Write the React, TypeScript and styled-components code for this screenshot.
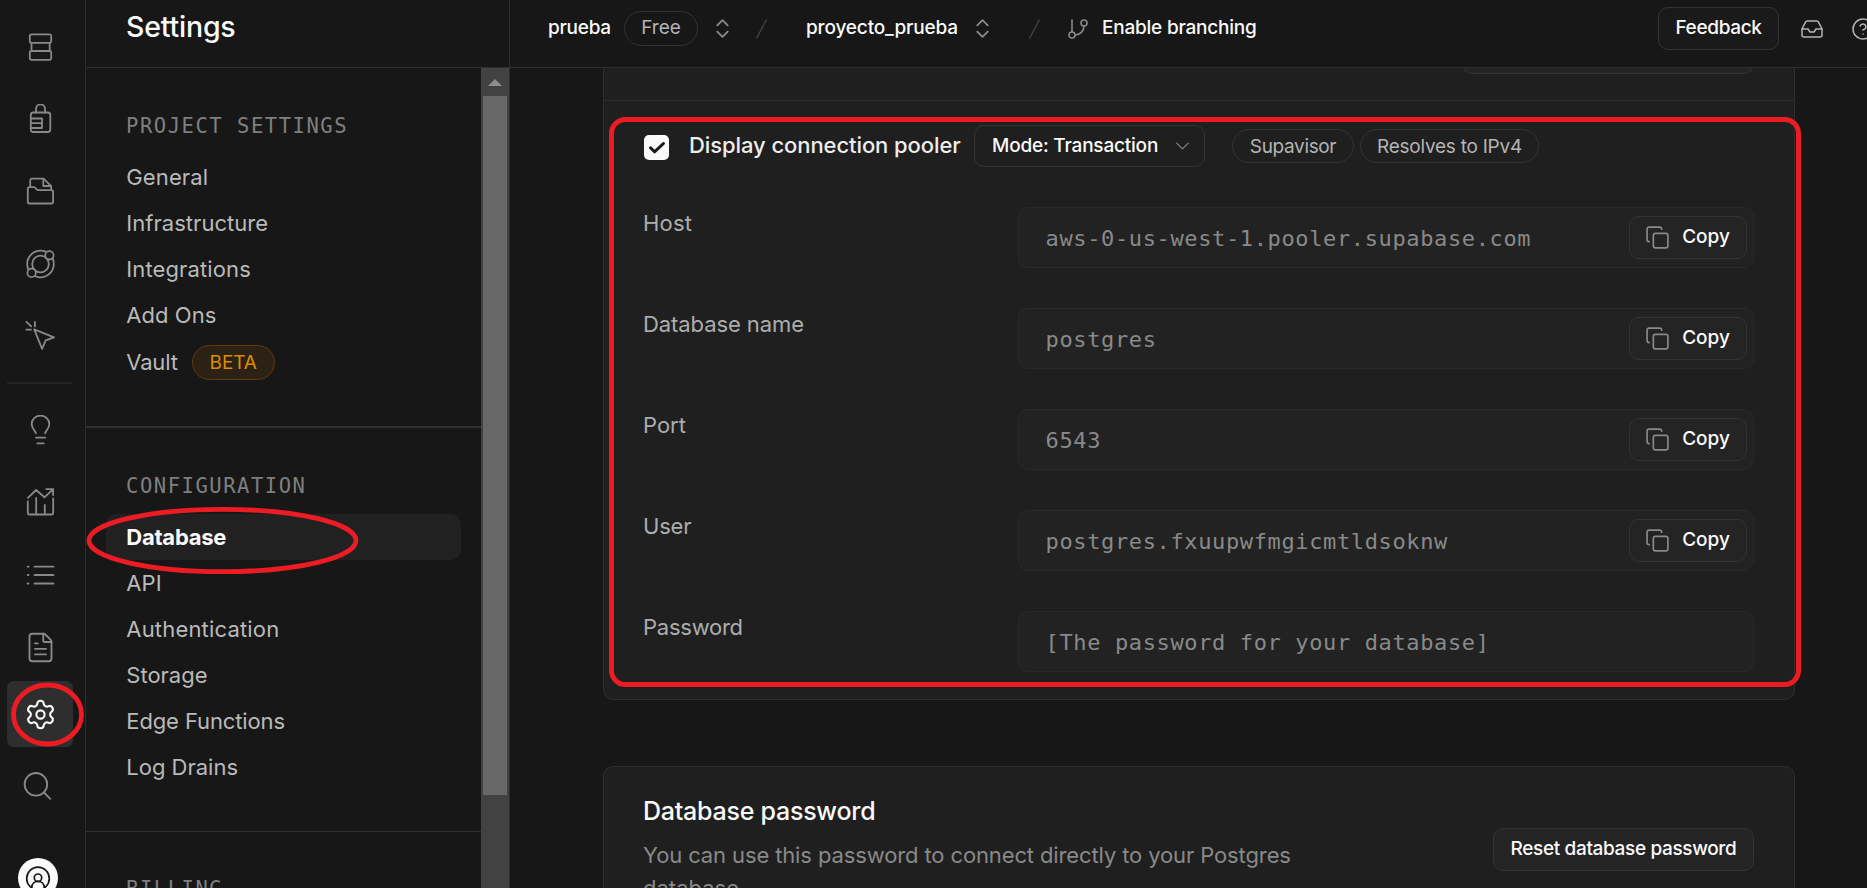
import React from 'react';
import styled, { createGlobalStyle } from 'styled-components';
import { ChevronDown, ChevronsUpDown, CircleHelp, Copy, FileText, GitBranch, Inbox, Settings } from 'lucide-react';

const BG = '#171717';
const SURFACE = '#1f1f1f';
const LINE = '#2e2e2e';
const MUTED = '#898989';
const LIGHT = '#b4b4b4';
const WHITE = '#fafafa';
const MONO = '"DejaVu Sans Mono", "Liberation Mono", monospace';

const GlobalStyle = createGlobalStyle`
  * { box-sizing: border-box; }
  body { margin: 0; overflow: hidden; background: ${BG}; font-family: Inter, "Liberation Sans", sans-serif; }
`;

const Shell = styled.div`
  position: relative;
  display: flex;
  width: 1867px;
  height: 888px;
  overflow: hidden;
  background: ${BG};
`;

const Label = styled.span<{ $ls?: number }>`
  white-space: nowrap;
  letter-spacing: ${p => p.$ls ?? 0}px;
`;

/* ---------- icon rail ---------- */

const Rail = styled.nav`
  flex: none;
  display: flex;
  flex-direction: column;
  width: 86px;
  padding: 13.5px 0 0 7px;
  border-right: 1px solid ${LINE};
`;

const RailGroup = styled.div`
  display: flex;
  flex-direction: column;
  gap: 6.4px;
`;

const RailButton = styled.div<{ $active?: boolean }>`
  flex: none;
  display: flex;
  align-items: center;
  justify-content: center;
  width: 66px;
  height: 66px;
  border-radius: 7px;
  color: ${p => (p.$active ? WHITE : MUTED)};
  background: ${p => (p.$active ? '#2e2e2e' : 'transparent')};
`;

const RailRule = styled.div`
  flex: none;
  width: 65px;
  height: 2px;
  margin: 13px 0;
  background: #242424;
`;

const GearButton = styled(RailButton)`
  margin-top: 0.8px;
`;

const SearchButton = styled(RailButton)`
  margin-top: 6.2px;
  padding: 0 6px 0 0;
`;

const Avatar = styled.div`
  flex: none;
  width: 40px;
  height: 40px;
  margin: 39px 0 0 11px;
  border-radius: 50%;
  overflow: hidden;
  background: ${WHITE};
`;

const Glyph = styled.svg.attrs({ viewBox: '-15.5 -15 30 30', width: 30, height: 30 })`
  display: block;
  fill: none;
  stroke: currentColor;
  stroke-width: 1.8;
  stroke-linecap: round;
  stroke-linejoin: round;
`;

const TableIcon = () => (
  <Glyph>
    <rect x="-10.7" y="-12.7" width="21.4" height="8.6" rx="1.8" />
    <path d="M-9-4.1V4M9.2-4.1V4" />
    <rect x="-10.7" y="4" width="21.4" height="8.8" rx="1.8" />
  </Glyph>
);

const LockIcon = () => (
  <Glyph>
    <path d="M-4.5-6.5v-3.7a4.5 4.5 0 0 1 9 0v3.7" />
    <rect x="-9.7" y="-6.5" width="19.5" height="19.5" rx="2.5" />
    <path d="M-9.5-.5H1.5V9H-9.5M-9.5 4.2H1.5" />
  </Glyph>
);

const FolderIcon = () => (
  <Glyph>
    <path d="M-10.3-4.5v-6a1.8 1.8 0 0 1 1.8-1.8H3L10.7-4.8V-1" />
    <path d="M2.8-12v7H10.5" />
    <path d="M-12.7-2a1.8 1.8 0 0 1 1.8-1.8h4.6c1.5 0 1.8 3 4 3H10.8A1.8 1.8 0 0 1 12.6 1V10.7a1.8 1.8 0 0 1-1.8 1.8H-10.9a1.8 1.8 0 0 1-1.8-1.8Z" />
  </Glyph>
);

const OrbitIcon = () => (
  <Glyph>
    <circle r="13.3" />
    <circle r="8.3" />
    <circle cx="8.9" cy="-8.7" r="4.2" fill={BG} />
    <circle cx="-8.9" cy="8.9" r="4.2" fill={BG} />
  </Glyph>
);

const CursorIcon = () => (
  <Glyph>
    <path d="M-6.3-6.7L13.5 1.3 5.2 4.3 1.6 12.8Z" />
    <path d="M-14-14.1-9.3-9.6M-5.6-14.1v4.5M-14.1-6.3h4.6" />
  </Glyph>
);

const BulbIcon = () => (
  <Glyph>
    <path d="M-4.6 3.2C-5.4 0-8.8-1.2-8.8-6a8.8 8.4 0 0 1 17.6 0C8.8-1.2 5.4 0 4.6 3.2" />
    <path d="M-4.5 7.6h9.3M-3.2 13.4h6.4" />
  </Glyph>
);

const ChartIcon = () => (
  <Glyph>
    <path d="M-12.6-4.2-4.4-12 4-4.7 12.3-12.7M5.8-12.9h6.8v6" />
    <path d="M-12.7-.7v11.5a1.7 1.7 0 0 0 1.7 1.7h22a1.7 1.7 0 0 0 1.7-1.7V-3.5M-4.3-4v16.4M4.3 3v9.4" />
  </Glyph>
);

const ListIcon = () => (
  <Glyph>
    <path d="M-12.8-8.3h.8M-12.8 0h.8M-12.8 8.5h.8M-6-8.3H13M-6 0H13M-6 8.5H13" />
  </Glyph>
);

const SearchIcon = () => (
  <Glyph>
    <circle cx="-1.6" cy="-1.7" r="11.3" />
    <path d="M6.5 6.5l6.3 6.3" />
  </Glyph>
);

const AvatarIcon = () => (
  <svg width="40" height="40" viewBox="0 0 40 40" fill="none" stroke="#171717" strokeWidth="1.7">
    <circle cx="20" cy="20.5" r="11.3" />
    <circle cx="20" cy="19.7" r="3.7" />
    <path d="M13.8 29.5c0-8.2 12.4-8.2 12.4 0" />
  </svg>
);

/* ---------- settings sidebar ---------- */

const Sidebar = styled.aside`
  flex: none;
  display: flex;
  flex-direction: column;
  width: 424px;
  border-right: 1px solid ${LINE};
`;

const SidebarTitle = styled.div`
  flex: none;
  height: 68px;
  padding: 9px 0 0 40px;
  border-bottom: 1px solid ${LINE};
  color: ${WHITE};
  font-size: 28.5px;
  font-weight: 500;
  line-height: 36px;
`;

const SidebarBody = styled.div`
  flex: 1;
  display: flex;
  min-height: 0;
`;

const SidebarNav = styled.div`
  flex: 1;
  overflow: hidden;
`;

const NavSection = styled.section<{ $rule?: number; $height: number; $top: number }>`
  height: ${p => p.$height}px;
  padding: ${p => p.$top}px 20px 0;
  border-bottom: ${p => p.$rule ?? 0}px solid #303030;
`;

const NavHeading = styled.div`
  padding-left: 20px;
  margin-bottom: 14px;
  color: #7f7f7f;
  font: 20.5px/28px ${MONO};
  letter-spacing: 1.54px;
`;

const NavItem = styled.div<{ $active?: boolean; $tall?: boolean }>`
  display: flex;
  align-items: center;
  gap: 14px;
  height: ${p => (p.$tall ? 48 : 46)}px;
  padding-left: 20.3px;
  border-radius: 10px;
  font-size: 22px;
  font-weight: ${p => (p.$active ? 700 : 400)};
  color: ${p => (p.$active ? WHITE : '#bababa')};
  background: ${p => (p.$active ? '#212121' : 'transparent')};
`;

const BetaBadge = styled.span`
  display: flex;
  align-items: center;
  justify-content: center;
  width: 83px;
  height: 35px;
  border: 1px solid #633a09;
  border-radius: 18px;
  background: #2b2115;
  color: #db8e00;
  font-size: 19px;
`;

const ScrollTrack = styled.div`
  flex: none;
  display: flex;
  flex-direction: column;
  align-items: center;
  width: 28px;
  padding-top: 11px;
  background: #424242;
`;

const ScrollArrow = styled.div`
  width: 14px;
  height: 7px;
  background: #8e8e8e;
  clip-path: polygon(50% 0, 100% 100%, 0 100%);
`;

const ScrollThumb = styled.div`
  width: 24px;
  height: 699px;
  margin-top: 10px;
  background: #686868;
`;

/* ---------- top bar ---------- */

const Main = styled.main`
  flex: 1;
  display: flex;
  flex-direction: column;
  min-width: 0;
`;

const TopBar = styled.header`
  flex: none;
  display: flex;
  align-items: center;
  height: 68px;
  padding: 0 0 10px 38px;
  border-bottom: 1px solid ${LINE};
  overflow: hidden;
  color: ${WHITE};
  font-size: 19px;
  svg { flex: none; display: block; }
`;

const Crumb = styled.div<{ $width: number; $indent?: number }>`
  flex: none;
  display: flex;
  align-items: center;
  width: ${p => p.$width}px;
  padding-left: ${p => p.$indent ?? 0}px;
  color: ${WHITE};
  & > svg { color: ${MUTED}; }
`;

const BranchCrumb = styled(Crumb)`
  gap: 12px;
`;

const CrumbText = styled(Label)<{ $width: number }>`
  width: ${p => p.$width}px;
  padding-bottom: 3px;
  font-weight: 500;
`;

const Pill = styled.span<{ $width: number; $height: number }>`
  flex: none;
  display: flex;
  align-items: center;
  justify-content: center;
  width: ${p => p.$width}px;
  height: ${p => p.$height}px;
  border: 1px solid #343434;
  border-radius: 18px;
  color: ${LIGHT};
  font-size: 19px;
`;

const PlanPill = styled(Pill)`
  margin-right: 12px;
  padding-bottom: 2px;
`;

const Slash = () => (
  <svg width="12" height="20" viewBox="0 0 12 20" stroke="#444" strokeWidth="1.3">
    <path d="M.5 19.5 10.5 .5" />
  </svg>
);

const OutlineButton = styled.button<{ $width: number; $height?: number; $fill?: string }>`
  flex: none;
  display: flex;
  align-items: center;
  justify-content: center;
  gap: 13px;
  width: ${p => p.$width}px;
  height: ${p => p.$height ?? 43}px;
  padding: 0 0 2px;
  border: 1px solid #343434;
  border-radius: 10px;
  background: ${p => p.$fill ?? '#242424'};
  color: ${WHITE};
  font: 500 19px Inter, sans-serif;
  svg { color: ${MUTED}; }
`;

const ModeButton = styled(OutlineButton)`
  justify-content: space-between;
  padding: 0 10px 1px 17px;
`;

const CopyButton = styled(OutlineButton)`
  gap: 12px;
  padding-right: 1px;
  svg { margin-top: 2px; }
`;

const TopActions = styled.div`
  display: flex;
  align-items: center;
  margin-left: auto;
  margin-right: -8px;
  color: ${LIGHT};
  & > svg:nth-of-type(1) { margin: 0 27px 0 21px; }
`;

/* ---------- content ---------- */

const Content = styled.div`
  flex: 1;
  min-height: 0;
  padding: 0 72px 0 93px;
  overflow: hidden;
`;

const PoolerCard = styled.section`
  height: 632px;
  border: 1px solid ${LINE};
  border-top: 0;
  border-radius: 0 0 10px 10px;
  background: ${SURFACE};
`;

const ClippedRow = styled.div`
  display: flex;
  justify-content: flex-end;
  align-items: flex-start;
  height: 33px;
  padding-right: 40px;
  border-bottom: 1px solid ${LINE};
  overflow: hidden;
`;

const ClippedSelect = styled.div`
  width: 292px;
  height: 43px;
  margin-top: -37px;
  border: 1px solid #343434;
  border-radius: 10px;
  background: #242424;
`;

const PoolerHeader = styled.div`
  display: flex;
  align-items: center;
  height: 42px;
  margin-top: 24px;
  padding-left: 40px;
`;

const Checkbox = styled.span`
  flex: none;
  display: flex;
  align-items: center;
  justify-content: center;
  width: 25px;
  height: 25px;
  margin: 3px 20px 0 0;
  border-radius: 5px;
  background: ${WHITE};
`;

const PoolerTitle = styled(Label)`
  width: 285px;
  padding-bottom: 3px;
  color: #ededed;
  font-size: 22px;
  font-weight: 500;
`;

const Tags = styled.div`
  display: flex;
  gap: 6px;
  margin-left: 27px;
`;

const Fields = styled.div`
  display: flex;
  flex-direction: column;
  gap: 40px;
  padding: 40px 39px 0;
`;

const FieldRow = styled.div`
  display: grid;
  grid-template-columns: 375px 736px;
  height: 61px;
  color: #adadad;
  font-size: 22px;
  line-height: 32px;
`;

const FieldBox = styled.div`
  display: flex;
  align-items: center;
  justify-content: space-between;
  height: 61px;
  padding: 0 6px 0 26.5px;
  border: 1px solid #2a2a2a;
  border-radius: 10px;
  background: #222222;
  color: ${MUTED};
  font: 22px/28px ${MONO};
`;

const FieldValue = styled.span`
  padding-top: 2px;
  letter-spacing: 0.63px;
`;

const PasswordCard = styled.section`
  display: flex;
  justify-content: space-between;
  height: 200px;
  margin-top: 66px;
  padding: 0 40px 0 39px;
  border: 1px solid ${LINE};
  border-radius: 10px;
  background: ${SURFACE};
  & > button { margin-top: 61px; }
`;

const PasswordCopy = styled.div`
  width: 700px;
  padding-top: 26px;
  color: ${MUTED};
  font-size: 22px;
  line-height: 33px;
`;

const CardTitle = styled.h3`
  margin: 0 0 10px;
  color: ${WHITE};
  font-size: 25px;
  font-weight: 500;
  line-height: 36px;
  letter-spacing: -0.25px;
`;

const Annotations = styled.svg`
  position: absolute;
  inset: 0;
  pointer-events: none;
`;

const projectItems: [string, number][] = [
  ['General', 0.12], ['Infrastructure', 0.04], ['Integrations', 0.12], ['Add Ons', 0.05],
];
const configItems: [string, number][] = [
  ['Database', -0.25], ['API', 0.1], ['Authentication', 0.18], ['Storage', 0], ['Edge Functions', -0.12], ['Log Drains', 0],
];
const fields: { name: string; ls: number; value: string; copy: boolean }[] = [
  { name: 'Host', ls: 0.2, value: 'aws-0-us-west-1.pooler.supabase.com', copy: true },
  { name: 'Database name', ls: -0.08, value: 'postgres', copy: true },
  { name: 'Port', ls: 0, value: '6543', copy: true },
  { name: 'User', ls: -0.2, value: 'postgres.fxuupwfmgicmtldsoknw', copy: true },
  { name: 'Password', ls: -0.25, value: '[The password for your database]', copy: false },
];

export default function App() {
  return (
    <>
      <GlobalStyle />
      <Shell>
        <Rail>
          <RailGroup>
            <RailButton><TableIcon /></RailButton>
            <RailButton><LockIcon /></RailButton>
            <RailButton><FolderIcon /></RailButton>
            <RailButton><OrbitIcon /></RailButton>
            <RailButton><CursorIcon /></RailButton>
          </RailGroup>
          <RailRule />
          <RailGroup>
            <RailButton><BulbIcon /></RailButton>
            <RailButton><ChartIcon /></RailButton>
            <RailButton><ListIcon /></RailButton>
            <RailButton><FileText size={33} strokeWidth={1.35} /></RailButton>
          </RailGroup>
          <GearButton $active><Settings size={33} strokeWidth={1.5} /></GearButton>
          <SearchButton><SearchIcon /></SearchButton>
          <Avatar><AvatarIcon /></Avatar>
        </Rail>

        <Sidebar>
          <SidebarTitle><Label $ls={-0.2}>Settings</Label></SidebarTitle>
          <SidebarBody>
            <SidebarNav>
              <NavSection $rule={2} $height={360} $top={44}>
                <NavHeading>PROJECT SETTINGS</NavHeading>
                {projectItems.map(([t, ls]) => (
                  <NavItem key={t}><Label $ls={ls}>{t}</Label></NavItem>
                ))}
                <NavItem $tall>
                  <Label $ls={-0.18}>Vault</Label>
                  <BetaBadge><Label $ls={-0.1}>BETA</Label></BetaBadge>
                </NavItem>
              </NavSection>
              <NavSection $rule={1} $height={404} $top={44}>
                <NavHeading>CONFIGURATION</NavHeading>
                {configItems.map(([t, ls]) => (
                  <NavItem key={t} $active={t === 'Database'}><Label $ls={ls}>{t}</Label></NavItem>
                ))}
              </NavSection>
              <NavSection $height={100} $top={43}>
                <NavHeading>BILLING</NavHeading>
              </NavSection>
            </SidebarNav>
            <ScrollTrack>
              <ScrollArrow />
              <ScrollThumb />
            </ScrollTrack>
          </SidebarBody>
        </Sidebar>

        <Main>
          <TopBar>
            <Crumb $width={208}>
              <CrumbText $ls={-0.25} $width={76}>prueba</CrumbText>
              <PlanPill $width={74} $height={35}>Free</PlanPill>
              <ChevronsUpDown size={25} strokeWidth={1.8} />
            </Crumb>
            <Slash />
            <Crumb $width={261} $indent={38}>
              <CrumbText $ls={-0.15} $width={164}>proyecto_prueba</CrumbText>
              <ChevronsUpDown size={25} strokeWidth={1.8} />
            </Crumb>
            <Slash />
            <BranchCrumb $width={240} $indent={25}>
              <GitBranch size={24} strokeWidth={1.6} />
              <CrumbText $ls={-0.22} $width={170}>Enable branching</CrumbText>
            </BranchCrumb>
            <TopActions>
              <OutlineButton $width={121} $fill="#1a1a1a"><Label $ls={-0.35}>Feedback</Label></OutlineButton>
              <Inbox size={24} strokeWidth={1.5} />
              <CircleHelp size={24} strokeWidth={1.5} />
            </TopActions>
          </TopBar>

          <Content>
            <PoolerCard>
              <ClippedRow><ClippedSelect /></ClippedRow>
              <PoolerHeader>
                <Checkbox>
                  <svg width="18" height="14" viewBox="0 0 18 14" fill="none" stroke="#171717" strokeWidth="3" strokeLinecap="round" strokeLinejoin="round">
                    <path d="M2.5 6.8 6.5 10.8 15.5 2.5" />
                  </svg>
                </Checkbox>
                <PoolerTitle $ls={-0.08}>Display connection pooler</PoolerTitle>
                <ModeButton $width={231} $height={42} $fill={SURFACE}>
                  <Label $ls={-0.2}>Mode: Transaction</Label>
                  <ChevronDown size={24} strokeWidth={1.2} />
                </ModeButton>
                <Tags>
                  <Pill $width={122} $height={34}><Label $ls={-0.35}>Supavisor</Label></Pill>
                  <Pill $width={179} $height={34}><Label $ls={-0.25}>Resolves to IPv4</Label></Pill>
                </Tags>
              </PoolerHeader>
              <Fields>
                {fields.map(f => (
                  <FieldRow key={f.name}>
                    <Label $ls={f.ls}>{f.name}</Label>
                    <FieldBox>
                      <FieldValue>{f.value}</FieldValue>
                      {f.copy && (
                        <CopyButton $width={118}>
                          <Copy size={25} strokeWidth={1.6} />
                          <Label>Copy</Label>
                        </CopyButton>
                      )}
                    </FieldBox>
                  </FieldRow>
                ))}
              </Fields>
            </PoolerCard>

            <PasswordCard>
              <PasswordCopy>
                <CardTitle>Database password</CardTitle>
                <Label $ls={-0.12}>You can use this password to connect directly to your Postgres</Label>
                <br />
                <Label>database.</Label>
              </PasswordCopy>
              <OutlineButton $width={261}><Label $ls={-0.36}>Reset database password</Label></OutlineButton>
            </PasswordCard>
          </Content>
        </Main>

        <Annotations width="1867" height="888" fill="none" stroke="#ed1c24">
          <rect x="611.5" y="119.5" width="1187" height="565" rx="14" strokeWidth="5" />
          <ellipse cx="222.5" cy="540.5" rx="133.5" ry="31.2" strokeWidth="4.8" />
          <ellipse cx="47.5" cy="714.5" rx="34" ry="29.5" strokeWidth="4.8" />
        </Annotations>
      </Shell>
    </>
  );
}
